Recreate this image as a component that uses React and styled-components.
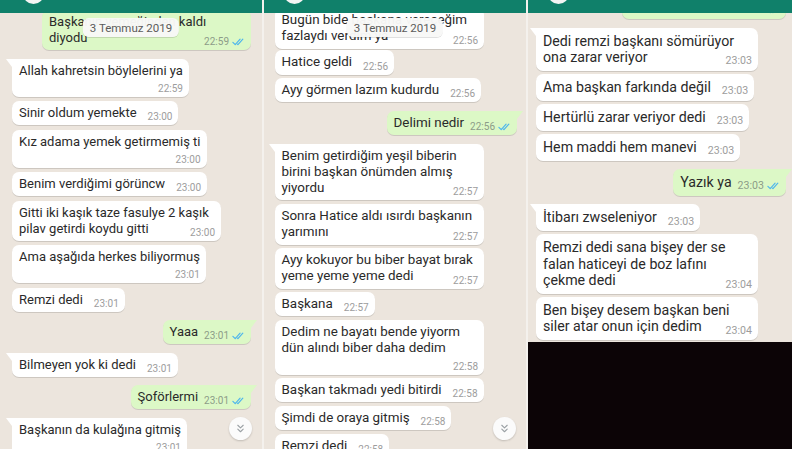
import React from 'react';
import styled, { createGlobalStyle, ThemeProvider, css } from 'styled-components';
import { ChevronsDown } from 'lucide-react';

const IN_BG = '#ffffff';
const OUT_BG = '#dcf8c6';

const Global = createGlobalStyle`
  html, body { margin: 0; padding: 0; }
  body {
    width: 792px; height: 449px; overflow: hidden;
    background: #f4f1ed;
    font-family: Roboto, "Noto Sans", "Liberation Sans", sans-serif;
  }
`;

const Collage = styled.main`
  display: flex;
  gap: 2px;
  width: 792px;
  height: 449px;
  background: #f4f1ed;
  overflow: hidden;
`;

const Panel = styled.section`
  position: relative;
  flex: 0 0 ${({ $w }) => $w}px;
  height: 100%;
  display: flex;
  flex-direction: column;
  background: #ece5dd;
  overflow: hidden;
`;

const Header = styled.header`
  flex: 0 0 13px;
  display: flex;
  align-items: flex-start;
  padding-left: ${({ theme }) => theme.avatarX}px;
  background: #10806a;
  overflow: hidden;
`;

const Avatar = styled.div`
  width: 21px;
  height: 21px;
  border-radius: 50%;
  background: #f4f4f4;
  margin-top: -17px;
`;

const Chat = styled.div`
  position: relative;
  flex: ${({ $h }) => ($h ? `0 0 ${$h}px` : '1 1 auto')};
  min-height: 0;
  overflow: hidden;
`;

const Thread = styled.div`
  display: flex;
  flex-direction: column;
  margin-top: ${({ $offset }) => $offset}px;
`;

const Blackout = styled.div`
  flex: 1 1 auto;
  background: #0c0406;
`;

const Bubble = styled.div`
  position: relative;
  box-sizing: border-box;
  display: flex;
  flex-direction: column;
  align-self: ${({ $out }) => ($out ? 'flex-end' : 'flex-start')};
  width: ${({ $wide, theme }) => ($wide ? `${theme.maxW}px` : 'auto')};
  margin-top: ${({ $mt }) => $mt}px;
  margin-left: ${({ $out, theme }) => ($out ? 0 : theme.inLeft)}px;
  margin-right: ${({ $out, theme }) => ($out ? theme.outRight : 0)}px;
  padding: ${({ theme }) => `${theme.padT}px ${theme.padR}px ${theme.padB}px ${theme.padL}px`};
  background: ${({ $out }) => ($out ? OUT_BG : IN_BG)};
  border-radius: 7px;
  box-shadow: 0 1px 0.5px rgba(0, 0, 0, 0.13);
  color: #2a2a2a;
  font-size: ${({ theme }) => theme.fs}px;
  line-height: ${({ theme }) => theme.lh}px;
  ${({ $tail, $out }) =>
    $tail &&
    css`
      border-top-${$out ? 'right' : 'left'}-radius: 0;
      &::before {
        content: '';
        position: absolute;
        top: 0;
        ${$out ? 'right' : 'left'}: -6px;
        width: 0;
        height: 0;
        border-top: 8px solid ${$out ? OUT_BG : IN_BG};
        border-${$out ? 'right' : 'left'}: 6px solid transparent;
      }
    `}
`;

const Line = styled.div`
  white-space: nowrap;
`;

const LastLine = styled.div`
  display: flex;
  align-items: flex-end;
  justify-content: space-between;
  gap: ${({ $out }) => ($out ? 6 : 11)}px;
  white-space: nowrap;
`;

const MetaRow = styled.div`
  display: flex;
  align-items: flex-end;
  justify-content: flex-end;
  height: ${({ theme }) => theme.metaRow}px;
`;

const Meta = styled.span`
  flex: none;
  display: inline-flex;
  align-items: center;
  gap: 3px;
  margin-bottom: -2px;
  font-size: ${({ theme }) => theme.metaFs}px;
  line-height: 12px;
  color: ${({ $out }) => ($out ? '#8c9c88' : '#9d9d9d')};
`;

const DateChip = styled.div`
  position: absolute;
  top: 18px;
  left: 50%;
  transform: translateX(-50%);
  height: 19px;
  padding: 0 7px;
  display: flex;
  align-items: center;
  border-radius: 6px;
  background: rgba(248, 248, 247, 0.97);
  box-shadow: 0 1px 0.5px rgba(0, 0, 0, 0.12);
  color: #5b5b5b;
  font-size: 11.5px;
  white-space: nowrap;
  z-index: 2;
`;

const ScrollButton = styled.div`
  position: absolute;
  right: 10px;
  bottom: 9px;
  width: 23px;
  height: 23px;
  border-radius: 50%;
  background: #fbfbfb;
  box-shadow: 0 1px 2px rgba(0, 0, 0, 0.18);
  display: flex;
  align-items: center;
  justify-content: center;
  color: #9aa0a4;
`;

const Ticks = () => (
  <svg width="13" height="8" viewBox="0 0 16 10" fill="none" stroke="#4fb6ec" strokeWidth="1.5" strokeLinecap="round" strokeLinejoin="round">
    <path d="M1 5.4 L3.9 8.3 L10 1.5" />
    <path d="M6.6 7.6 L7.3 8.3 L13.4 1.5" />
  </svg>
);

const Message = ({ m, index }) => {
  const mode = m.mode || 'last';
  const lines = m.lines;
  const meta = (
    <Meta $out={m.out}>
      {m.time}
      {m.out && <Ticks />}
    </Meta>
  );
  const mt = index === 0 ? 0 : m.mt != null ? m.mt : m.first ? m.gapFirst : m.gap;
  return (
    <Bubble $out={m.out} $tail={m.first} $wide={lines.length > 1} $mt={mt}>
      {mode === 'below' ? (
        <>
          {lines.map((l, i) => (
            <Line key={i}>{l}</Line>
          ))}
          <MetaRow>{meta}</MetaRow>
        </>
      ) : (
        <>
          {lines.slice(0, -1).map((l, i) => (
            <Line key={i}>{l}</Line>
          ))}
          <LastLine $out={m.out}>
            <span>{lines[lines.length - 1]}</span>
            {meta}
          </LastLine>
        </>
      )}
    </Bubble>
  );
};

const themes = {
  p1: { fs: 13, lh: 16, padT: 4, padB: 4, padL: 7, padR: 6, inLeft: 12, outRight: 11, maxW: 209, metaFs: 10, metaRow: 14, avatarX: 23, gap: 4.5, groupGap: 8.5 },
  p2: { fs: 13.4, lh: 16.3, padT: 4, padB: 4, padL: 7, padR: 6, inLeft: 10.5, outRight: 9, maxW: 209.5, metaFs: 10, metaRow: 14, avatarX: 20, gap: 3.5, groupGap: 8.5 },
  p3: { fs: 14.2, lh: 16.4, padT: 5, padB: 5.5, padL: 7, padR: 6, inLeft: 8, outRight: 6, maxW: 222, metaFs: 10.6, metaRow: 14, avatarX: 20, gap: 3, groupGap: 8.5 },
};

const panels = [
  {
    id: 'p1',
    width: 262,
    offset: -3,
    date: '3 Temmuz 2019',
    scroll: true,
    messages: [
      { out: true, lines: ['Başkanın yemeğinden kaldı', 'diyodu'], time: '22:59' },
      { lines: ['Allah kahretsin böylelerini ya'], time: '22:59', mode: 'below', first: true },
      { lines: ['Sinir oldum yemekte'], time: '23:00' },
      { lines: ['Kız adama yemek getirmemiş ti'], time: '23:00', mode: 'below' },
      { lines: ['Benim verdiğimi görüncw'], time: '23:00' },
      { lines: ['Gitti iki kaşık taze fasulye 2 kaşık', 'pilav getirdi koydu gitti'], time: '23:00' },
      { lines: ['Ama aşağıda herkes biliyormuş'], time: '23:01', mode: 'below' },
      { lines: ['Remzi dedi'], time: '23:01' },
      { out: true, lines: ['Yaaa'], time: '23:01', first: true },
      { lines: ['Bilmeyen yok ki dedi'], time: '23:01', first: true },
      { out: true, lines: ['Şoförlermi'], time: '23:01', first: true },
      { lines: ['Başkanın da kulağına gitmiş'], time: '23:01', mode: 'below', first: true },
    ],
  },
  {
    id: 'p2',
    width: 262,
    offset: -4.9,
    date: '3 Temmuz 2019',
    scroll: true,
    messages: [
      { lines: ['Bugün bide başkana vereceğim', 'fazlaydı verdim ya'], time: '22:56' },
      { lines: ['Hatice geldi'], time: '22:56', mt: 1.5 },
      { lines: ['Ayy görmen lazım kudurdu'], time: '22:56' },
      { out: true, lines: ['Delimi nedir'], time: '22:56', first: true },
      { lines: ['Benim getirdiğim yeşil biberin', 'birini başkan önümden almış', 'yiyordu'], time: '22:57', first: true },
      { lines: ['Sonra Hatice aldı ısırdı başkanın', 'yarımını'], time: '22:57' },
      { lines: ['Ayy kokuyor bu biber bayat bırak', 'yeme yeme yeme dedi'], time: '22:57' },
      { lines: ['Başkana'], time: '22:57' },
      { lines: ['Dedim ne bayatı bende yiyorm', 'dün alındı biber daha dedim'], time: '22:58', mode: 'below' },
      { lines: ['Başkan takmadı yedi bitirdi'], time: '22:58' },
      { lines: ['Şimdi de oraya gitmiş'], time: '22:58' },
      { lines: ['Remzi dedi'], time: '22:58' },
    ],
  },
  {
    id: 'p3',
    width: 264,
    offset: -34.9,
    chatHeight: 329,
    messages: [
      { out: true, lines: ['Peki başkan ne diyor ki?'], time: '23:02', mode: 'below' },
      { lines: ['Dedi remzi başkanı sömürüyor', 'ona zarar veriyor'], time: '23:03', first: true },
      { lines: ['Ama başkan farkında değil'], time: '23:03' },
      { lines: ['Hertürlü zarar veriyor dedi'], time: '23:03' },
      { lines: ['Hem maddi hem manevi'], time: '23:03' },
      { out: true, lines: ['Yazık ya'], time: '23:03', first: true },
      { lines: ['İtibarı zwseleniyor'], time: '23:03', first: true },
      { lines: ['Remzi dedi sana bişey der se', 'falan haticeyi de boz lafını', 'çekme dedi'], time: '23:04' },
      { lines: ['Ben bişey desem başkan beni', 'siler atar onun için dedim'], time: '23:04' },
    ],
  },
];

export default function App() {
  return (
    <>
      <Global />
      <Collage>
        {panels.map((p) => {
          const t = themes[p.id];
          return (
            <ThemeProvider theme={t} key={p.id}>
              <Panel $w={p.width}>
                <Header>
                  <Avatar />
                </Header>
                <Chat $h={p.chatHeight}>
                  <Thread $offset={p.offset}>
                    {p.messages.map((m, i) => (
                      <Message key={i} index={i} m={{ ...m, gap: t.gap, gapFirst: t.groupGap }} />
                    ))}
                  </Thread>
                </Chat>
                {p.chatHeight && <Blackout />}
                {p.date && <DateChip>{p.date}</DateChip>}
                {p.scroll && (
                  <ScrollButton>
                    <ChevronsDown size={13} strokeWidth={2} />
                  </ScrollButton>
                )}
              </Panel>
            </ThemeProvider>
          );
        })}
      </Collage>
    </>
  );
}
